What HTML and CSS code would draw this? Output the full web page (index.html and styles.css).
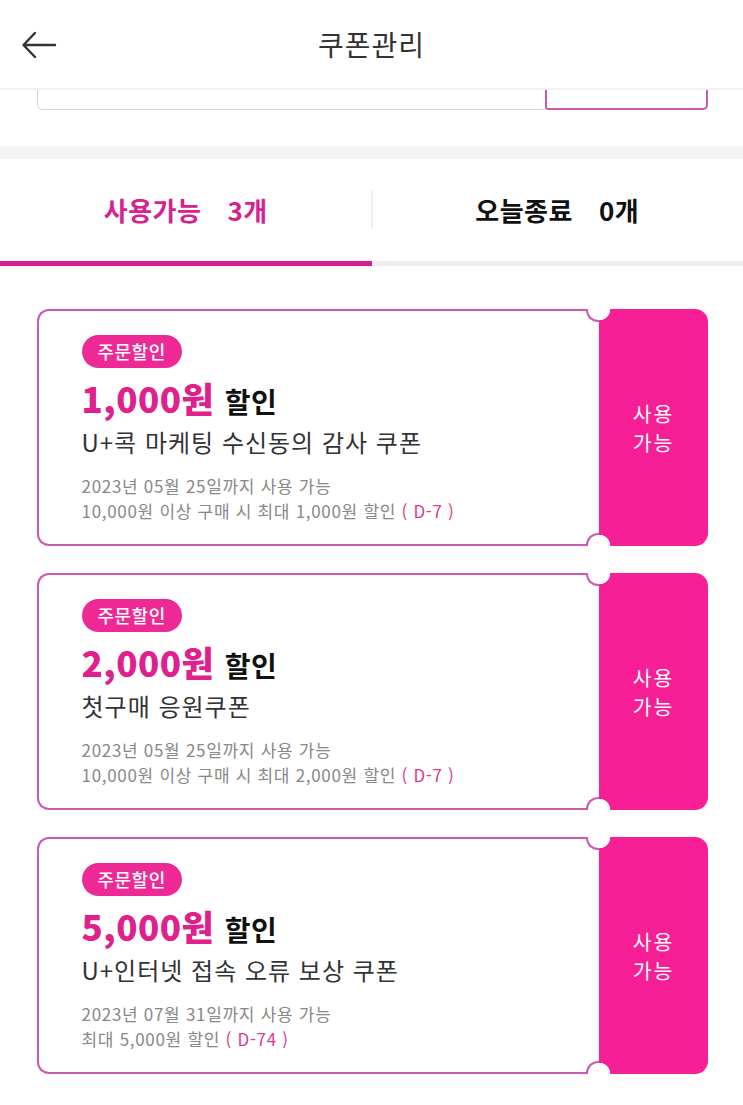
FILE: index.html
```html
<!DOCTYPE html>
<html lang="ko">
<head>
<meta charset="utf-8">
<title>쿠폰관리</title>
<link rel="stylesheet" href="styles.css">
</head>
<body>
<header class="topbar">
  <button class="back" aria-label="뒤로">
    <svg width="36" height="28" viewBox="0 0 36 28"><path d="M34 14H3M14 2L2.5 14L14 26" fill="none" stroke="#333" stroke-width="2.4" stroke-linecap="round" stroke-linejoin="round"/></svg>
  </button>
  <h1 class="title">쿠폰관리</h1>
</header>
<div class="search-row">
  <div class="search-input"></div>
  <div class="search-btn"></div>
</div>
<div class="band"></div>
<nav class="tabs">
  <div class="tab active"><span>사용가능</span><span>3개</span></div>
  <div class="tab"><span>오늘종료</span><span>0개</span></div>
</nav>
<main class="list">
  <section class="coupon">
    <div class="body">
      <span class="badge">주문할인</span>
      <p class="amount"><strong>1,000원</strong> 할인</p>
      <p class="name">U+콕 마케팅 수신동의 감사 쿠폰</p>
      <p class="meta">2023년 05월 25일까지 사용 가능</p>
      <p class="meta">10,000원 이상 구매 시 최대 1,000원 할인 <em>( D-7 )</em></p>
    </div>
    <div class="stub"><span>사용</span><span>가능</span></div>
  </section>
  <section class="coupon">
    <div class="body">
      <span class="badge">주문할인</span>
      <p class="amount"><strong>2,000원</strong> 할인</p>
      <p class="name">첫구매 응원쿠폰</p>
      <p class="meta">2023년 05월 25일까지 사용 가능</p>
      <p class="meta">10,000원 이상 구매 시 최대 2,000원 할인 <em>( D-7 )</em></p>
    </div>
    <div class="stub"><span>사용</span><span>가능</span></div>
  </section>
  <section class="coupon">
    <div class="body">
      <span class="badge">주문할인</span>
      <p class="amount"><strong>5,000원</strong> 할인</p>
      <p class="name">U+인터넷 접속 오류 보상 쿠폰</p>
      <p class="meta">2023년 07월 31일까지 사용 가능</p>
      <p class="meta">최대 5,000원 할인 <em>( D-74 )</em></p>
    </div>
    <div class="stub"><span>사용</span><span>가능</span></div>
  </section>
</main>
</body>
</html>
```

FILE: styles.css
```css
* { box-sizing: border-box; }
html, body { margin: 0; padding: 0; background: #fff; }
body {
  font-family: "Noto Sans CJK KR", "Noto Sans", sans-serif;
  color: #222;
  width: 743px;
  overflow: hidden;
}
p { margin: 0; }

.topbar {
  height: 90px;
  display: flex;
  align-items: center;
  justify-content: center;
  position: relative;
  border-bottom: 2px solid #f1f1f1;
}
.back {
  position: absolute;
  left: 21px;
  top: 31px;
  padding: 0;
  border: 0;
  background: none;
  line-height: 0;
}
.title {
  margin: 0;
  font-size: 28px;
  font-weight: 400;
  color: #333;
  letter-spacing: 1px;
}

.search-row {
  height: 20px;
  display: flex;
  margin: 0 35px 0 37px;
}
.search-input {
  flex: 1;
  border: 1.5px solid #d4d4d4;
  border-top: 0;
  border-right: 0;
  border-radius: 0 0 0 5px;
}
.search-btn {
  width: 163px;
  border: 2px solid #c95aae;
  border-top: 0;
  border-radius: 0 0 5px 3px;
}

.band {
  height: 13px;
  margin-top: 36px;
  background: #f4f4f4;
}

.tabs {
  display: flex;
  height: 107px;
}
.tab {
  flex: 1;
  display: flex;
  align-items: center;
  justify-content: center;
  gap: 26px;
  font-size: 26px;
  letter-spacing: 0.5px;
  font-weight: 700;
  color: #111;
  border-bottom: 5px solid #eeeeee;
  position: relative;
  padding-bottom: 2px;
}
.tab.active {
  color: #d6228f;
  border-bottom-color: #d91b92;
}
.tab.active::after {
  content: "";
  position: absolute;
  right: -1px;
  top: 31px;
  width: 2px;
  height: 38px;
  background: #eeeeee;
}

.list {
  padding: 43px 35px 0 37px;
  display: flex;
  flex-direction: column;
  gap: 27px;
}
.coupon {
  display: flex;
  height: 237px;
}
.body {
  flex: 1;
  position: relative;
  border: 2px solid #cc5ab0;
  border-right: 0;
  border-radius: 12px 0 0 12px;
  padding: 23.5px 0 0 42.5px;
}
.body::before,
.body::after {
  content: "";
  position: absolute;
  right: 0;
  width: 11px;
  height: 11px;
  background: #fff;
  border-left: 2px solid #cc5ab0;
}
.body::before {
  top: -2px;
  border-bottom: 2px solid #cc5ab0;
  border-bottom-left-radius: 12px;
}
.body::after {
  bottom: -2px;
  border-top: 2px solid #cc5ab0;
  border-top-left-radius: 12px;
}
.stub {
  width: 109px;
  border-radius: 0 13px 13px 0;
  background:
    radial-gradient(circle at 0 0, #fff 11px, transparent 11.6px),
    radial-gradient(circle at 0 100%, #fff 11px, transparent 11.6px),
    #f71f96;
  color: #fff;
  font-size: 20.5px;
  letter-spacing: 1.8px;
  line-height: 29px;
  display: flex;
  flex-direction: column;
  align-items: center;
  justify-content: center;
  text-align: center;
}
.stub span { display: block; }

.badge {
  display: inline-block;
  height: 33px;
  line-height: 32px;
  padding: 0 16px;
  border-radius: 17px;
  background: #ee2996;
  color: #fff;
  font-size: 18px;
  letter-spacing: 0.5px;
  font-weight: 500;
}
.amount {
  margin-top: 8px;
  font-size: 28px;
  line-height: 44px;
  font-weight: 700;
  color: #111;
  letter-spacing: 0.5px;
}
.amount strong {
  font-size: 35px;
  color: #e0208c;
  letter-spacing: 0.5px;
  margin-right: 2px;
}
.name {
  margin-top: 3px;
  font-size: 24px;
  line-height: 32px;
  color: #333;
  letter-spacing: 1px;
}
.meta {
  font-size: 17px;
  line-height: 25px;
  color: #888;
  letter-spacing: 0.7px;
}
.name + .meta { margin-top: 15px; }
.meta em {
  font-style: normal;
  color: #d63a98;
}
```
